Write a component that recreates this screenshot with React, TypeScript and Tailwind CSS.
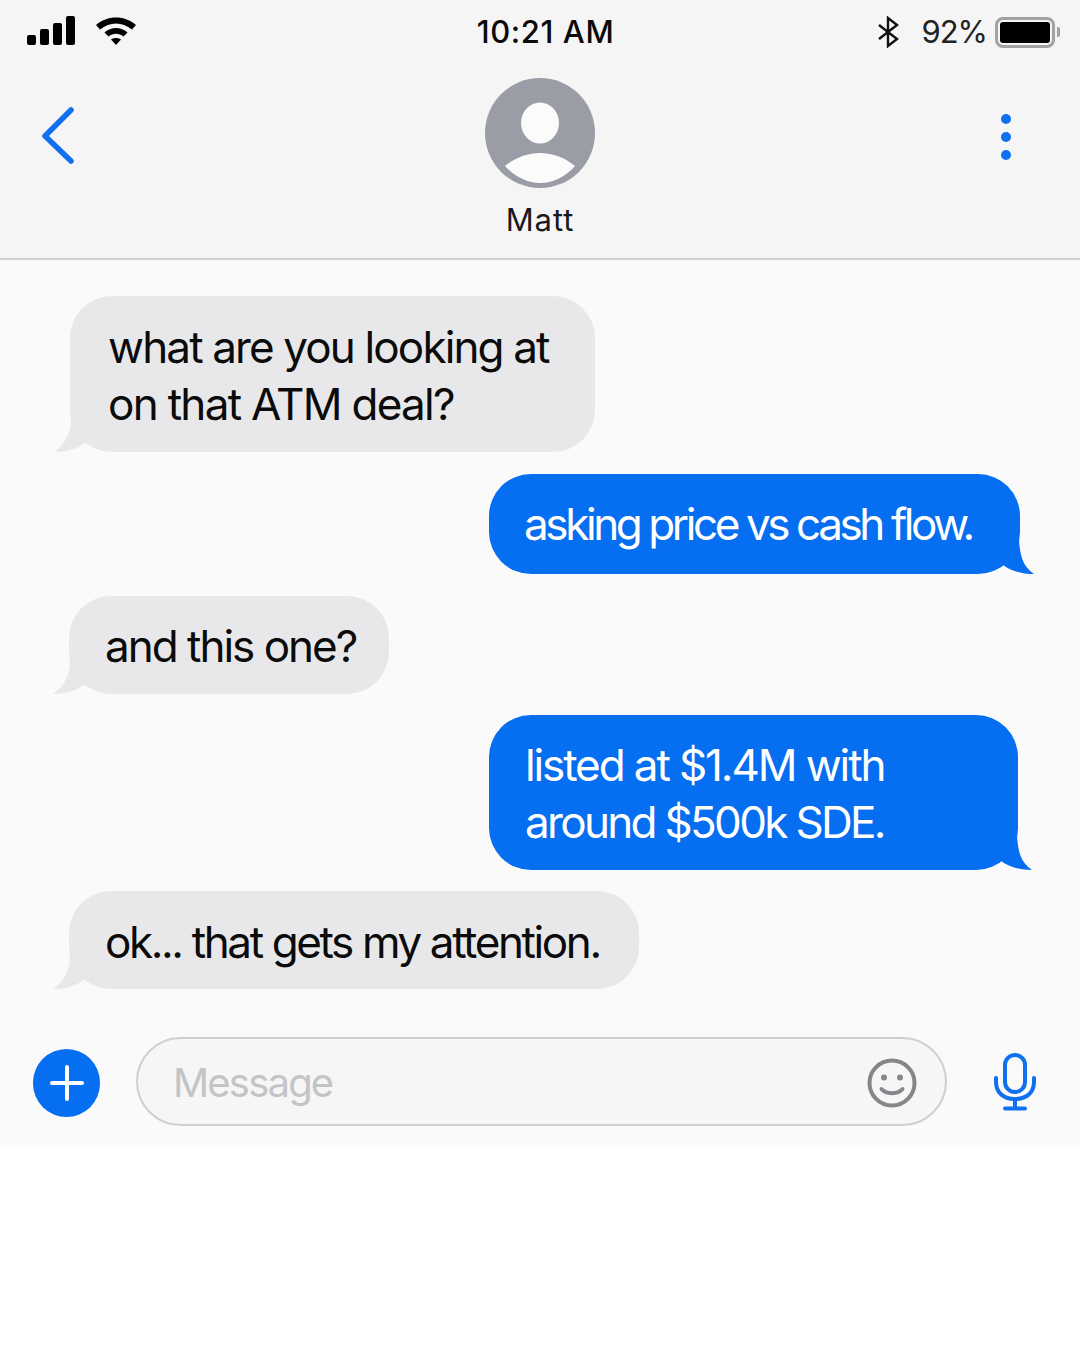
const font = "font-['Inter',sans-serif]";

type Line = { text: string; tracking: string };

type BubbleProps = { size: string; spacing: string; lines: Line[] };

function BubbleLines({ lines }: { lines: Line[] }) {
  return (
    <>
      {lines.map((line) => (
        <div key={line.text} className={`relative h-[57px] text-[44px] leading-[57px] whitespace-nowrap ${line.tracking}`}>{line.text}</div>
      ))}
    </>
  );
}

function Incoming({ size, spacing, lines }: BubbleProps) {
  return (
    <div className={`relative flex flex-col justify-center self-start rounded-[42px] bg-[#e8e8ea] text-[#0b0b0c] ${size} ${spacing}`}>
      <svg className="absolute bottom-0 left-[-16px]" width="40" height="34" viewBox="0 0 40 34">
        <path d="M17 0 C17 14 12 26 0 34 C12 34 23 31 31 25 L40 0 Z" fill="#e8e8ea" />
      </svg>
      <BubbleLines lines={lines} />
    </div>
  );
}

function Outgoing({ size, spacing, lines }: BubbleProps) {
  return (
    <div className={`relative flex flex-col justify-center self-end rounded-[42px] bg-[#066ef1] text-white ${size} ${spacing}`}>
      <svg className="absolute right-[-14px] bottom-0" width="40" height="34" viewBox="0 0 40 34">
        <path d="M25 0 C26 14 28 26 40 34 C28 34 17 31 9 25 L0 0 Z" fill="#066ef1" />
      </svg>
      <BubbleLines lines={lines} />
    </div>
  );
}

export default function App() {
  return (
    <div className={`h-[1350px] w-[1080px] overflow-hidden bg-white ${font}`}>
      <div className="flex h-[1145px] flex-col bg-[#fafafa]">
        <header className="h-[260px] border-b-2 border-[#d2d2d4] bg-[#f5f5f6]">
          <div className="flex h-[64px] items-center justify-between pl-[27px] pr-[20px]">
            <div className="-mt-[4px] flex w-[300px] items-center gap-[20px]">
              <div className="flex items-end gap-[4px]">
                <div className="h-[10px] w-[9px] rounded-[2px] bg-black" />
                <div className="h-[16px] w-[9px] rounded-[2px] bg-black" />
                <div className="h-[22px] w-[9px] rounded-[2px] bg-black" />
                <div className="h-[29px] w-[9px] rounded-[2px] bg-black" />
              </div>
              <svg width="42" height="32" viewBox="0 0 42 32">
                <path d="M1 11 C12 1 30 1 41 11 L37 15.5 C27 7.5 15 7.5 5 15.5 Z" fill="#000" />
                <path d="M9.5 18.5 C16 12.5 26 12.5 32.5 18.5 L28.5 22.5 C24 18.8 18 18.8 13.5 22.5 Z" fill="#000" />
                <path d="M16 25.5 C19 23.5 23 23.5 26 25.5 L21 31 Z" fill="#000" />
              </svg>
            </div>
            <div className="ml-[4px] text-[31px] font-medium tracking-[0.6px] text-[#0b0b0c]">10:21 AM</div>
            <div className="flex w-[300px] items-center justify-end">
              <svg width="22" height="32" viewBox="0 0 22 32" fill="none" stroke="#111" strokeWidth="2.4" strokeLinejoin="miter">
                <path d="M2 9 L20 23 L11 30 V2 L20 9 L2 23" />
              </svg>
              <div className="ml-[22px] text-[31px] tracking-[-1px] text-[#222]">92%</div>
              <div className="ml-[8px] flex items-center">
                <div className="flex h-[31px] w-[60px] items-center justify-center rounded-[8px] border-[3px] border-[#a2a2a6]">
                  <div className="h-[21px] w-[50px] rounded-[3px] bg-black" />
                </div>
                <div className="ml-[2px] h-[10px] w-[3px] rounded-r-[2px] bg-[#a2a2a6]" />
              </div>
            </div>
          </div>
          <div className="flex items-start justify-between pl-[40px] pr-[69px]">
            <svg className="mt-[42px]" width="36" height="60" viewBox="0 0 36 60" fill="none" stroke="#0f70f0" strokeWidth="5.5" strokeLinecap="round" strokeLinejoin="round">
              <path d="M31 4 L5 30 L31 55" />
            </svg>
            <div className="ml-[2px] flex flex-col items-center">
              <svg className="mt-[14px]" width="110" height="110" viewBox="0 0 110 110">
                <circle cx="55" cy="55" r="55" fill="#9a9ca6" />
                <ellipse cx="55" cy="45" rx="19" ry="20.5" fill="#fbfbfb" />
                <path d="M20 88 C30 80 42 75 55 75 C68 75 80 80 90 88 C80 99 68 105 55 105 C42 105 30 99 20 88 Z" fill="#fbfbfb" />
              </svg>
              <div className="mt-[13px] ml-[1px] text-[31px] leading-[38px] tracking-[0.9px] text-[#1a1a1c]">Matt</div>
            </div>
            <div className="mt-[50px] flex flex-col gap-[8px]">
              <div className="h-[10px] w-[10px] rounded-full bg-[#0f70f0]" />
              <div className="h-[10px] w-[10px] rounded-full bg-[#0f70f0]" />
              <div className="h-[10px] w-[10px] rounded-full bg-[#0f70f0]" />
            </div>
          </div>
        </header>
        <main className="flex flex-col gap-[21px] pt-[36px]">
          <Incoming
            size="h-[156px] w-[525px]"
            spacing="ml-[70px] pl-[38px] pt-[4px]"
            lines={[
              { text: "what are you looking at", tracking: "tracking-[-1.86px]" },
              { text: "on that ATM deal?", tracking: "tracking-[-1.7px]" },
            ]}
          />
          <Outgoing
            size="h-[100px] w-[531px]"
            spacing="mr-[60px] mt-[1px] pl-[35px]"
            lines={[{ text: "asking price vs cash flow.", tracking: "tracking-[-3.4px]" }]}
          />
          <Incoming
            size="h-[98px] w-[320px]"
            spacing="ml-[69px] mt-[1px] pl-[36px] pt-[2px]"
            lines={[{ text: "and this one?", tracking: "tracking-[-2px]" }]}
          />
          <Outgoing
            size="h-[155px] w-[529px]"
            spacing="mr-[62px] pl-[36px] pt-[3px]"
            lines={[
              { text: "listed at $1.4M with", tracking: "tracking-[-2.1px]" },
              { text: "around $500k SDE.", tracking: "tracking-[-2.68px]" },
            ]}
          />
          <Incoming
            size="h-[98px] w-[570px]"
            spacing="ml-[69px] pl-[36px] pt-[4px]"
            lines={[{ text: "ok... that gets my attention.", tracking: "tracking-[-2.38px]" }]}
          />
        </main>
        <footer className="mt-[48px] flex items-center pl-[33px]">
          <div className="mt-[3px] flex h-[68px] w-[67px] items-center justify-center rounded-full bg-[#066ef1]">
            <svg width="34" height="36" viewBox="0 0 34 36" fill="none" stroke="#fff" strokeWidth="4" strokeLinecap="round">
              <path d="M17 2 V34 M2 18 H32" />
            </svg>
          </div>
          <div className="ml-[36px] flex h-[89px] w-[811px] items-center justify-between rounded-full border-2 border-[#cfcfd1] bg-[#f6f6f7] pl-[35px] pr-[28px]">
            <div className="mt-[2px] text-[40px] tracking-[-1.8px] text-[#c4c4c6]">Message</div>
            <svg className="mt-[3px]" width="50" height="50" viewBox="0 0 50 50" fill="none" stroke="#85858a" strokeWidth="4" strokeLinecap="round">
              <circle cx="25" cy="25" r="22.5" />
              <circle cx="17" cy="19.5" r="3" fill="#85858a" stroke="none" />
              <circle cx="33" cy="19.5" r="3" fill="#85858a" stroke="none" />
              <path d="M14.5 31 C19 36.5 31 36.5 35.5 31" />
            </svg>
          </div>
          <svg className="ml-[47px]" width="42" height="58" viewBox="0 0 42 58" fill="none" stroke="#0f70f0" strokeWidth="4" strokeLinecap="round">
            <rect x="11" y="2" width="20" height="37" rx="10" />
            <path d="M2 25 V29 C2 40 10 46 21 46 C32 46 40 40 40 29 V25" />
            <path d="M21 46 V55 M11 55.5 H31" />
          </svg>
        </footer>
      </div>
    </div>
  );
}
